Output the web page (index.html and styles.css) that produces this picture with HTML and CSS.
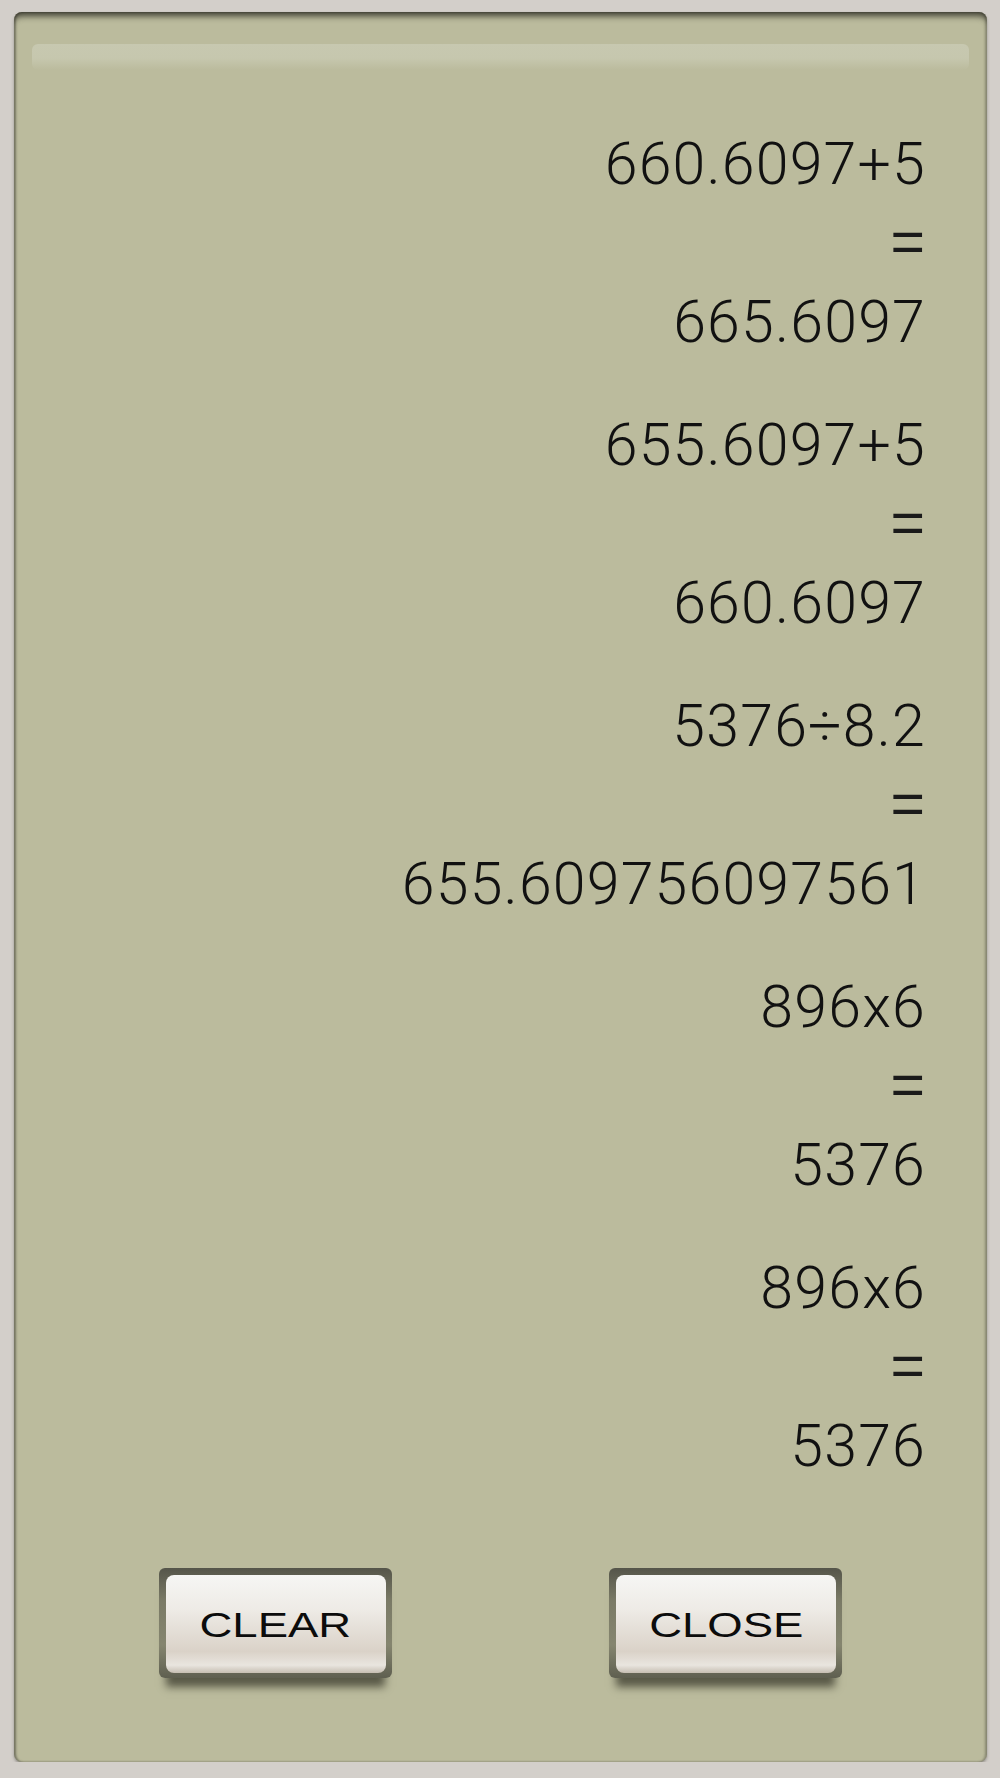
FILE: index.html
```html
<!DOCTYPE html>
<html lang="en">
<head>
    <meta charset="UTF-8">
    <meta name="viewport" content="width=device-width, initial-scale=1.0">
    <title>History</title>
    <link rel="stylesheet" href="styles.css">
</head>
<body>
    <div class="panel">
        <!-- reflejo de la parte alta del visor -->
        <div class="gloss"></div>

        <!-- historial de operaciones -->
        <div class="history">
            <div class="entry">
                <div class="line">660.6097+5</div>
                <div class="line eq">=</div>
                <div class="line">665.6097</div>
            </div>
            <div class="entry">
                <div class="line">655.6097+5</div>
                <div class="line eq">=</div>
                <div class="line">660.6097</div>
            </div>
            <div class="entry">
                <div class="line">5376÷8.2</div>
                <div class="line eq">=</div>
                <div class="line">655.609756097561</div>
            </div>
            <div class="entry">
                <div class="line">896x6</div>
                <div class="line eq">=</div>
                <div class="line">5376</div>
            </div>
            <div class="entry">
                <div class="line">896x6</div>
                <div class="line eq">=</div>
                <div class="line">5376</div>
            </div>
        </div>

        <div class="actions">
            <button type="button" class="key" id="clearButton"><span class="face"><span class="label">CLEAR</span></span></button>
            <button type="button" class="key" id="closeButton"><span class="face"><span class="label">CLOSE</span></span></button>
        </div>
    </div>
</body>
</html>
```

FILE: styles.css
```css
body {
    margin: 0;
    background-color: #d3cfca;
    font-family: Roboto, "Liberation Sans", Arial, sans-serif;
}

/* Panel del historial */
.panel {
    width: 973px;
    height: 1750px;
    margin: 12px 0 0 14px;
    box-sizing: border-box;
    background-color: #bbbb9d;
    border-radius: 8px;
    box-shadow: inset 0 7px 6px -3px rgba(45, 45, 35, 0.85),
                inset 2px 0 2px rgba(60, 60, 50, 0.45),
                inset -2px 0 2px rgba(60, 60, 50, 0.3),
                0 2px 3px rgba(90, 88, 80, 0.5);
    display: flex;
    flex-direction: column;
}

.gloss {
    height: 26px;
    margin: 32px 18px 0;
    border-radius: 6px;
    background: linear-gradient(#c7c8b0 0%, #c6c7ae 55%, rgba(198, 199, 174, 0) 100%);
}

.history {
    padding: 54px 61px 0 0;
    text-align: right;
}

.entry {
    margin-bottom: 44px;
}

.entry:last-child {
    margin-bottom: 0;
}

.line {
    font-size: 59px;
    font-weight: 300;
    letter-spacing: 1.2px;
    line-height: 79px;
    height: 79px;
    color: #111;
}

.line.eq {
    font-family: "Liberation Sans", Arial, sans-serif;
    font-weight: 400;
    letter-spacing: 0;
    padding-right: 1px;
    color: #1a1a1a;
}

/* Botones */
.actions {
    margin-top: auto;
    padding: 0 36px 84px;
    display: grid;
    grid-template-columns: 1fr 1fr;
    justify-items: center;
}

.key {
    width: 233px;
    height: 110px;
    padding: 7px 6px 5px 7px;
    border: none;
    border-radius: 6px;
    background: linear-gradient(#55554a, #7a7a66 30%, #85856f 70%, #5f5f50);
    box-shadow: 0 16px 8px -7px rgba(25, 25, 15, 0.6);
    cursor: pointer;
    display: block;
}

.face {
    height: 100%;
    border-radius: 8px;
    background: linear-gradient(#f6f6f4 0%, #eeebe6 35%, #dad2c8 78%, #e9e5df 92%, #c6beb2 100%);
    display: flex;
    align-items: center;
    justify-content: center;
}

.label {
    display: inline-block;
    font-family: "Liberation Sans", Arial, sans-serif;
    font-size: 35px;
    color: #0c0c0c;
    transform: scaleX(1.3);
    margin-top: 2px;
}
```
